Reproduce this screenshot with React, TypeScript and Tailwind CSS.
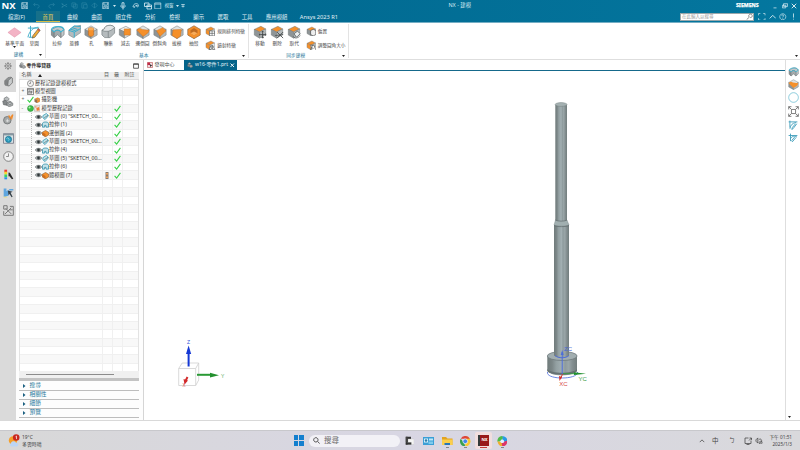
import React from "react";

type P = { s?: number };

/* ---------- drawings ---------- */

const SHAPES: Record<string, React.ReactNode> = {
  plane: <path d="M1 9 8 4l7 5-7 5z" fill="#f3b3c5" stroke="#e08fa8" strokeWidth=".5" />,
  extrude: (
    <g stroke="#6e7678" strokeWidth=".7">
      <path d="M1.500 6l3 2.500v6l-3-2.500z" fill="#8f9698" />
      <path d="M4.500 8.500C5.500 6 10.500 6 11.500 8.500v6l3.500-3V6c-2-3-5-4-8-3L1.500 6z" fill="#c3c9cb" />
      <path d="M4.500 8.500C5.500 6 10.500 6 11.500 8.500v6L8 11.500l-3.500 3z" fill="#a4abad" />
      <path d="M1.500 6c1-3.500 12-5 13.500 0M4.500 8.500C5.500 6 10.500 6 11.500 8.500L15 6M1.500 6l3 2.500" fill="none" stroke="#3eb4d2" strokeWidth="1.200" />
    </g>
  ),
  revolve: (
    <g strokeWidth=".7">
      <path d="M2 7l5-4 8-1.500v8L7 15l-5-3z" fill="#b4bbbd" stroke="#7d8587" />
      <path d="M2 7l6 2 7-4M2 7l6-5 7 1M3.500 5.500l6 2M5.500 4l6 2M8 9v6" fill="none" stroke="#35afd0" strokeWidth="1.100" />
    </g>
  ),
  union: (
    <g stroke="#6e7678" strokeWidth=".7">
      <path d="M1 7l3-2c0-4 9-5 11-1v6l-5 5H4l-3-3z" fill="#b5bbbd" />
      <path d="M1 7l3-2c0-4 9-5 11-1l-4 3-3 1H4z" fill="#e1e4e5" />
      <path d="M8 8v7" />
    </g>
  ),
};

function Cube({ s = 14, top = "#d9dddd", left = "#8f9597", right = "#b4b9ba", kids }: P & { top?: string; left?: string; right?: string; kids?: React.ReactNode }) {
  return (
    <svg width={s} height={s} viewBox="0 0 16 16" className="shrink-0">
      <g stroke="#747a7b" strokeWidth=".6" strokeLinejoin="round">
        <path d="M1.500 5 9 1.500l5.500 3L7.500 8z" fill={top} />
        <path d="M1.500 5l6 3v7l-6-3.500z" fill={left} />
        <path d="M14.500 4.500 7.500 8v7l7-4z" fill={right} />
      </g>
      {kids}
    </svg>
  );
}

function Shape({ k, s = 14 }: P & { k: string }) {
  return (
    <svg width={s} height={s} viewBox="0 0 16 16" className="shrink-0">
      {SHAPES[k]}
    </svg>
  );
}

const O = "#f5902a";

function Block({ s = 14, children }: P & { children?: React.ReactNode }) {
  return (
    <svg width={s} height={s} viewBox="0 0 16 16" className="shrink-0">
      <g stroke="#747a7b" strokeWidth=".6" strokeLinejoin="round">
        <path d="M1 5 8 1l7 4-7 4z" fill="#dfe2e2" />
        <path d="M1 5l7 4v6.500L1 11.500z" fill="#8f9597" />
        <path d="M15 5 8 9v6.500l7-4z" fill="#b4b9ba" />
      </g>
      {children}
    </svg>
  );
}

function Sketch({ s = 14 }: P) {
  return (
    <svg width={s} height={s} viewBox="0 0 16 16" className="shrink-0">
      <path d="M1 3.500h13M4 1v13M1 14C3 6 7 3 13 2.500M2 14h6" fill="none" stroke="#42aeca" strokeWidth="1.100" />
      <path d="M13 4l2 2-6 8-3 1 .8-3z" fill="#f0ab37" stroke="#5b5343" strokeWidth=".7" />
      <path d="M13 4l2 2-1 1.500-2-2z" fill="#cf574a" />
    </svg>
  );
}

const movers = (
  <path d="M11 7v8M7 11h8M9.800 8.300 11 7l1.200 1.300M9.800 13.700 11 15l1.200-1.300M8.300 9.800 7 11l1.300 1.200M13.700 9.800 15 11l-1.300 1.200" stroke="#3f4445" strokeWidth="1" fill="#fff" />
);
const crossMark = <path d="M8 8l7 7M15 8l-7 7M6 12l9-1" stroke="#4a4f50" strokeWidth="1" fill="none" />;
const swapMark = (
  <g fill="#ecefef" stroke="#4a4f50" strokeWidth=".8">
    <path d="M8 10l4-3 3 3-4 4z" />
    <path d="M7 13c2 3 6 2 8-1" fill="none" />
  </g>
);
const gridMark = (
  <g fill="#fff" stroke="#4b5051" strokeWidth=".9">
    <path d="M7 7.500h7.500V15H7zM10.800 7.500V15M7 11.200h7.500" />
  </g>
);
const mirrorMark = <path d="M9.500 8v6.500H6zM11.500 8v6.500H15z" fill="#fff" stroke="#3b4041" strokeWidth=".9" />;

function Eye() {
  return (
    <svg width="7" height="6" viewBox="0 0 14 12" className="shrink-0">
      <path d="M.5 6C3 1.500 11 1.500 13.500 6 11 10.500 3 10.500.5 6z" fill="#b9bdbe" stroke="#444b4d" strokeWidth="1.100" />
      <circle cx="7" cy="6" r="2.800" fill="#30383a" />
    </svg>
  );
}

function Check({ s = 7 }: P) {
  return (
    <svg width={s} height={s} viewBox="0 0 12 12" className="shrink-0">
      <path d="M1 6.500 4.500 10.500 11 1.500" fill="none" stroke="#35cf45" strokeWidth="1.800" />
    </svg>
  );
}

function Clock({ s = 11, c = "#777" }: P & { c?: string }) {
  return (
    <svg width={s} height={s} viewBox="0 0 16 16" className="shrink-0" fill="none" stroke={c}>
      <circle cx="8" cy="8" r="7" strokeWidth="1.300" fill="#f1f1f1" />
      <path d="M8 3.500V8H4.500" strokeWidth="1.200" />
    </svg>
  );
}

function Parts({ s = 11 }: P) {
  return (
    <svg width={s} height={s} viewBox="0 0 16 16" className="shrink-0">
      <g stroke="#5c6062" strokeWidth=".8">
        <path d="M3 3l4-2 3 3-2 3-5-1z" fill="#b9bdbe" />
        <path d="M1 7l4-1 3 3-1 4-5-1z" fill="#85898b" />
        <path d="M7 9l4-2 4 3v3l-5 2-3-2z" fill="#a7abac" />
        <circle cx="11" cy="10.500" r="1.500" fill="#e6e8e8" />
      </g>
    </svg>
  );
}

function Down({ c = "#222" }: { c?: string }) {
  return (
    <svg width="3" height="2" viewBox="0 0 6 4" className="shrink-0">
      <path d="M0 0h6L3 4z" fill={c} />
    </svg>
  );
}

function Line({ s = 9, d, c = "#d4eaf2", w = 1.4 }: P & { d: string; c?: string; w?: number }) {
  return (
    <svg width={s} height={s} viewBox="0 0 16 16" className="shrink-0">
      <path d={d} fill="none" stroke={c} strokeWidth={w} />
    </svg>
  );
}

const SAVE = "M1.500 1.500h13v13h-13zM4 1.500v5h8v-5M4 14.500V9h8v5.500M6 11.500h4";

/* ---------- top bar ---------- */

function TitleBar() {
  return (
    <div className="flex h-[11px] items-center text-[5px] text-[#d5eaf2]">
      <div className="w-[18px] pl-[1.500px] text-[9.500px] leading-none font-bold text-white">NX</div>
      <div className="flex w-[13px] justify-center"><Line s={7.500} d={SAVE} /></div>
      <div className="flex w-[11px] justify-center"><Line s={7} c="#2f88a8" d="M5 2 1.500 6 5 9.500M1.500 6h8c6 0 6 8 0 8" /></div>
      <div className="flex w-[18px] justify-center"><Line s={7} c="#2f88a8" d="M11 2l3.500 4L11 9.500M14.500 6h-8c-6 0-6 8 0 8" /></div>
      <div className="flex w-[9px] justify-center"><Line s={7} c="#2f88a8" d="M2 5l12 6M2 11l12-6M1 4h3v3M1 12h3V9" /></div>
      <div className="flex w-[10px] justify-center"><Line s={7} c="#2f88a8" d="M2 2h8v9H2zM6 5h8v9H6z" /></div>
      <div className="flex w-[10px] justify-center"><Line s={7} c="#2f88a8" d="M2 2h10v4M2 2v12h4M6 6h8v8H6z" /></div>
      <div className="flex w-[10px] justify-center"><Line s={7} c="#2f88a8" d="M2 8l6-6 6 6-6 6zM8 2v12" /></div>
      <div className="flex w-[13px] justify-center"><Line s={7.500} d={SAVE} /></div>
      <div className="flex w-[4px] justify-center"><Down c="#d4eaf2" /></div>
      <div className="flex w-[13px] justify-center"><Line s={8} w={1.700} d="M6 1.500h4v7H6zM3.500 7c0 6 9 6 9 0M8 11.500V15" /></div>
      <div className="flex w-[13px] justify-center"><Line s={7} w={1.700} d="M2 10l3 3 2-4M3 11c-1-9 12-9 12-3 0 4-5 4-5 0M8 8h5" /></div>
      <div className="flex w-[12px] justify-center"><Line s={8} w={1.700} d="M1 2h9v7H1zM6 6h9v8H6zM6 9h9" /></div>
      <div className="flex w-[8px] justify-center"><Line s={7.500} d="M1.500 2h13v12.500h-13zM1.500 4.500h13" /></div>
      <div className="w-[14px] text-center text-[4.500px]">視窗</div>
      <div className="flex w-[9px] items-center justify-between"><Down c="#d4eaf2" /><Line s={4} w={3} d="M1 2h14M3 8h10L8 13z" /></div>
      <div className="ml-[263.500px] flex-1 text-[5.400px]">NX - 建模</div>
      <div className="w-[36px] text-[5.200px] font-bold text-white [-webkit-text-stroke:.25px_white]">SIEMENS</div>
      <div className="flex w-[28px] items-center justify-between pr-[3px]">
        <Line s={6} d="M4 13h8" w={2} />
        <Line s={6} w={2} d="M4 2h11v7H4zM1 6h9v7H1z" />
        <Line s={6} w={2.200} c="#fff" d="M2 2l12 12M14 2 2 14" />
      </div>
    </div>
  );
}

const TABS = ["曲線", "曲面", "組立件", "分析", "檢視", "顯示", "選取", "工具", "應用模組"];

function MenuBar() {
  return (
    <div className="flex h-[11px] items-center text-[5.400px] text-[#e2f1f6]">
      <div className="w-[36px] pt-px pl-[8px] text-[5.400px]">檔案(F)</div>
      <div className="flex h-full w-[24px] items-center justify-center border-b border-[#d9bd45] bg-[#17708a] pt-[1.500px] text-[#e6cc58]">首頁</div>
      <div className="flex gap-[13.400px] pt-px pl-[7px] whitespace-nowrap">
        {TABS.map((t) => <span key={t}>{t}</span>)}
        <span className="-ml-px text-[5.700px] leading-[8px]">Ansys 2023 R1</span>
      </div>
      <div className="ml-auto flex h-[8px] w-[74px] items-center justify-between border border-[#9aa7ab] bg-white pl-px text-[4.500px] text-[#9b9b9b]">
        在此輸入以搜尋
        <Line s={7} c="#555" w={1.500} d="M7.500 9.500a4 4 0 1 1 2 1M7.500 9.500 1.500 15" />
      </div>
      <div className="flex w-[46px] items-center justify-between pr-[3px] pl-[4px]">
        <Line s={7.500} d="M1 5V1h4M11 1h4v4M15 11v4h-4M5 15H1v-4" />
        <Line s={7.500} w={2} d="M1.500 11.500 8 5l6.500 6.500" />
        <Line s={7.500} d="M8 1.500a6.500 6.500 0 1 0 .1 0M6 6c0-3 4-3 4 0 0 1.500-2 1.500-2 3.500M8 11v1.500" />
        <Line s={7} w={1.900} d="M8 1v9.500M8 13v2" />
      </div>
    </div>
  );
}

/* ---------- ribbon ---------- */

function Tool({ icon, label, wide }: { icon: React.ReactNode; label: string; wide?: boolean }) {
  return (
    <div className={wide ? "flex w-[19.500px] flex-col items-center" : "flex w-[17.100px] flex-col items-center"}>
      <div className="flex h-[15px] items-center">{icon}</div>
      <div className="h-[7px] text-[4.700px] leading-[8px] whitespace-nowrap">{label}</div>
      {wide && label.length > 2 && <Down />}
    </div>
  );
}

function SmallTool({ icon, label }: { icon: React.ReactNode; label: string }) {
  return (
    <div className="flex h-[14px] items-center gap-[1.500px] text-[4.600px] whitespace-nowrap">
      {icon}
      {label}
    </div>
  );
}

function Group({ label, className, labelClass, children }: { label: string; className: string; labelClass: string; children: React.ReactNode }) {
  return (
    <div className={"flex h-[34px] flex-col border-r border-[#e3e3e3] " + className}>
      <div className="flex h-[28px]">{children}</div>
      <div className="flex h-[7px] items-center text-[4.700px] text-[#28799a]">
        <span className={"flex-1 pt-px text-center " + labelClass}>{label}</span>
        <span className="pr-[3px]"><Down /></span>
      </div>
    </div>
  );
}

function Ribbon() {
  return (
    <div className="flex h-[37px] border-b border-[#dedede] bg-white pt-px text-[#444]">
      <Group label="建構" className="w-[46px] pl-[5px]" labelClass="pr-[7px]">
        <Tool wide icon={<Shape k="plane" s={15} />} label="基準平面" />
        <Tool wide icon={<Sketch />} label="草圖" />
      </Group>
      <Group label="基本" className="w-[203px] pl-[2.500px]" labelClass="pr-[3px]">
        <Tool icon={<Shape k="extrude" s={15} />} label="拉伸" />
        <Tool icon={<Shape k="revolve" s={14.500} />} label="旋轉" />
        <Tool icon={<Block><path d="M5 4.500c0-2 6-2 6 0v7c-1 2-5 2-6 0z" fill={O} stroke="#b9651b" strokeWidth=".6" /><ellipse cx="8" cy="4.500" rx="3" ry="1.400" fill="#f8ad5c" /></Block>} label="孔" />
        <Tool icon={<Shape k="union" s={14.500} />} label="聯集" />
        <Tool icon={<Cube top="#eceeee" right="#dfe2e2" kids={<path d="M7 4.500h7v7H7z" fill={O} stroke="#c36e22" strokeWidth=".5" />} />} label="減去" />
        <Tool icon={<Block><path d="M1 6c2-2.500 4-2.500 6-1l8 1c-1 4-4 5-7 7z" fill={O} stroke="#c36e22" strokeWidth=".5" /></Block>} label="邊倒圓" />
        <Tool icon={<Block><path d="M4 6.500 11 3l4 3.500L8 13z" fill={O} stroke="#c36e22" strokeWidth=".5" /></Block>} label="倒斜角" />
        <Tool icon={<Block><path d="M3.500 5.500 13 5l-1 7.500-4 3-5.500-3.500z" fill={O} stroke="#c36e22" strokeWidth=".5" /></Block>} label="拔模" />
        <Tool icon={<Block><path d="M1 5l7-4 7 4v6.500l-7 4-7-4z" fill={O} stroke="#a9652a" strokeWidth=".6" /><path d="M4 6l4-2.500L12 6v3.500L8 12 4 9.500z" fill="#c06c22" /><path d="M4 9.500 8 7.500l4 2L8 12z" fill="#f8ab58" /></Block>} label="抽殼" />
        <div className="pl-[3px]">
          <SmallTool icon={<Cube s={10.500} top={O} left={O} right="#e9ecec" kids={gridMark} />} label="規則排列特徵" />
          <SmallTool icon={<Cube s={10.500} top={O} left={O} right="#e9ecec" kids={mirrorMark} />} label="鏡射特徵" />
        </div>
      </Group>
      <Group label="同步建模" className="w-[100px] pl-[2.500px]" labelClass="pr-[2px]">
        <Tool icon={<Cube top={O} kids={movers} />} label="移動" />
        <Tool icon={<Cube top={O} kids={crossMark} />} label="刪除" />
        <Tool icon={<Cube top={O} kids={swapMark} />} label="取代" />
        <div className="pl-[3px]">
          <SmallTool icon={<Cube s={10.500} top={O} kids={<path d="M7 7l4-2 4 2v6l-4 2-4-2z" fill="#eee" stroke="#444" />} />} label="偏置" />
          <SmallTool icon={<Cube s={10.500} top={O} left={O} kids={<path d="M6 8h6l3 7M7 15l3-7" fill="#fff" stroke="#444" />} />} label="調整圓角大小" />
        </div>
      </Group>
      <div className="flex flex-1 items-end justify-end pr-[2px] pb-[2.500px]"><Down /></div>
    </div>
  );
}

/* ---------- left side ---------- */

function Rail() {
  return (
    <div className="flex w-[16px] flex-col items-center bg-[#dadada]">
      <div className="flex h-[10px] items-center pt-[2px]"><Line s={8} c="#777" w={1.600} d="M8 3a5 5 0 1 0 .1 0M8 6a2 2 0 1 0 .1 0M8 0v3M8 13v3M0 8h3M13 8h3M2.500 2.500l2 2M11.500 11.500l2 2M13.500 2.500l-2 2M4.500 11.500l-2 2" /></div>
      <div className="flex h-[22px] items-center">
        <svg width="9" height="11" viewBox="0 0 14 16" stroke="#666" strokeWidth=".8">
          <path d="M1 7l5-5 5-1 2 2v7l-5 5-6-1-1-2z" fill="#8e9293" />
          <path d="M7 6l5-4 1 1v7l-5 5-2-1z" fill="#c9cccd" />
          <path d="M3 6v7M5 6v8" />
        </svg>
      </div>
      <div className="flex h-[19px] w-full items-center justify-center bg-white"><Parts s={11.500} /></div>
      <div className="flex h-[17px] items-center">
        <svg width="12" height="11" viewBox="0 0 16 16">
          <circle cx="7" cy="9" r="5.500" fill="#a3a6a6" stroke="#626667" />
          <path d="M5 10h5M7 7v5" stroke="#eee" />
          <path d="M9 2l2 4 4-5-2 7" fill="none" stroke="#f08a2c" strokeWidth="1.800" />
        </svg>
      </div>
      <div className="flex h-[20px] items-center">
        <svg width="11" height="11" viewBox="0 0 16 16">
          <path d="M.7 1h14.600v14H.7z" fill="#d8e2e5" stroke="#667" />
          <path d="M.7 1h14.600v2.500H.7z" fill="#8397a0" />
          <circle cx="8" cy="9.300" r="4.500" fill="#2d9dc0" stroke="#176986" />
          <path d="M5 8l2-1 2 2-1 2" stroke="#a5e0e0" fill="none" />
        </svg>
      </div>
      <div className="flex h-[16px] items-center"><Clock s={11} /></div>
      <div className="flex h-[21px] items-center">
        <svg width="11" height="11" viewBox="0 0 16 16">
          <path d="M2 1h4v4H2z" fill="#ec3b34" /><path d="M2 4h4v4H2z" fill="#f5d92c" /><path d="M2 8h4v4H2z" fill="#35d466" /><path d="M2 12h4v3H2z" fill="#2c92e8" />
          <path d="M8 5l2 .5 5 8.500-2 1-4-5-1 1z" fill="#2b2b2b" />
        </svg>
      </div>
      <div className="flex h-[15px] items-center">
        <svg width="11" height="11" viewBox="0 0 16 16">
          <path d="M1 2h4v12H1zM5 6l3-2v9H5zM9 3h6v2H9z" fill="#5fa6df" />
          <path d="M7 5l7 2-3 1.500 3 5.500-1.500 1L9.500 10 8 12z" fill="#344049" /><path d="M1 14h5v1.500H1z" fill="#eadf8d" />
        </svg>
      </div>
      <div className="flex h-[21px] items-center"><Line s={11} c="#777" w={1.400} d="M1 1h5v5H1zM10 2h5v13H1V9M3 13l9-9M4 5l8 8M9 7h5" /></div>
    </div>
  );
}

type Row = { kind: "root" | "item"; icon: React.ReactNode; text: string; flag?: boolean; check?: boolean; twig?: string };

const sk = (
  <svg width="7" height="7" viewBox="0 0 16 16" className="shrink-0">
    <path d="M2 6 10 1l5 5-8 9-5-4z" fill="#bfe4ec" stroke="#2b93ae" strokeWidth="1.700" />
    <path d="M5 11l9-6" stroke="#61757a" strokeWidth="1.800" />
  </svg>
);
const ex = <svg width="7" height="7" viewBox="0 0 16 16" className="shrink-0"><path d="M1 6c0-5 14-5 14 0v8H9v-4H6v4H1z" fill="#c3e2e9" stroke="#2b8ba5" strokeWidth="1.800" /></svg>;
const bl = <Block s={7}><path d="M1 5l7-4 7 4v6.500l-7 4-7-4z" fill={O} stroke="#8b5a2b" /><path d="M1 5l7 4v6.500l-7-4z" fill="#cc6d1e" /></Block>;

const ROWS: Row[] = [
  { kind: "root", icon: <Clock s={7} c="#555" />, text: "歷程記錄建模模式" },
  { kind: "root", twig: "+", icon: <Line s={7} c="#555" w={1.600} d="M1 1h14v14H1zM1 4h14M4 13V7h3v6M10 7v6M8 9h5" />, text: "模型視圖" },
  { kind: "root", twig: "+", icon: <><Check /><Cube s={6.500} top={O} left="#9d6a45" right={O} /></>, text: "攝影機" },
  {
    kind: "root", twig: "-", check: true, text: "模型歷程記錄",
    icon: (
      <>
        <svg width="7" height="7" viewBox="0 0 14 14"><circle cx="7" cy="7" r="6" fill="#3bbd45" stroke="#258a30" /><circle cx="5" cy="5" r="2" fill="#b5f0b5" /></svg>
        <svg width="6.500" height="7" viewBox="0 0 14 14"><path d="M1 1h12v12H1z" fill="#eee6e0" stroke="#a09a96" /><path d="M2 2l4 1-2 3zM5 6l6-2 1 7-6 1z" fill="#ea7b35" /></svg>
      </>
    ),
  },
  { kind: "item", check: true, icon: sk, text: '草圖 (0) "SKETCH_00...' },
  { kind: "item", check: true, icon: ex, text: "拉伸 (1)" },
  { kind: "item", check: true, icon: bl, text: "邊倒圓 (2)" },
  { kind: "item", check: true, icon: sk, text: '草圖 (3) "SKETCH_00...' },
  { kind: "item", check: true, icon: ex, text: "拉伸 (4)" },
  { kind: "item", check: true, icon: sk, text: '草圖 (5) "SKETCH_00...' },
  { kind: "item", check: true, icon: ex, text: "拉伸 (6)" },
  { kind: "item", check: true, flag: true, icon: bl, text: "體模圖 (7)" },
];

function TreeRow({ row, odd }: { row?: Row; odd: boolean }) {
  return (
    <div className={"flex h-[8.360px] shrink-0 items-center border-b border-[#f0f0f0] " + (odd ? "bg-[#f8f8f8]" : "bg-white")}>
      <div className="flex h-full w-[83px] items-center overflow-hidden border-r border-[#f0f0f0] whitespace-nowrap">
        {row && row.kind === "root" && (
          <>
            <span className="w-[7px] pl-[2px] text-[5px] leading-none text-[#666]">{row.twig}</span>
            <span className="flex items-center">{row.icon}</span>
            <span className="pl-[1.500px] text-[5.200px] leading-none">{row.text}</span>
          </>
        )}
        {row && row.kind === "item" && (
          <>
            <span className="ml-[11.500px] h-full w-[3.500px] shrink-0 border-l border-dotted border-[#bbb]" />
            <Eye />
            {row.icon}
            <span className="pl-[.500px] text-[5.200px] leading-none">{row.text}</span>
          </>
        )}
      </div>
      <div className="flex h-full w-[10px] items-center justify-center border-r border-[#f0f0f0]">
        {row?.flag && <svg width="4" height="7" viewBox="0 0 8 14"><path d="M1 0h6v14H1z" fill="#8b7b6e" /><path d="M2 2h4v3H2zM2 9h4v3H2z" fill="#f0a35c" /></svg>}
      </div>
      <div className="flex h-full w-[10px] items-center justify-center border-r border-[#f0f0f0]">{row?.check && <Check />}</div>
    </div>
  );
}

function Navigator() {
  return (
    <div className="flex w-[128px] flex-col border-r border-[#d5d5d5] bg-[#fdfdfd] pr-[4px] pl-[2.500px] text-[#333]">
      <div className="flex h-[11.500px] shrink-0 items-center font-bold text-[#333]">
        <Parts s={7} />
        <span className="flex-1 pl-px text-[4.900px]">零件導覽器</span>
        <Line s={6} c="#333" w={2} d="M1.500 2h13v12h-13zM1.500 3.500h13" />
      </div>
      <div className="flex h-[8px] shrink-0 items-center border-b border-[#dcdcdc] bg-[#efefef] text-[5px] text-[#555]">
        <span className="flex w-[83px] items-center gap-[6.500px] pl-[3px]">名稱<svg width="4" height="3" viewBox="0 0 8 6"><path d="M0 6h8L4 0z" fill="#222" /></svg></span>
        <span className="w-[10px] text-center">目</span>
        <span className="w-[10px] text-center">最</span>
        <span className="flex-1 pl-[3px]">附註</span>
      </div>
      <div className="flex h-[291px] shrink-0 flex-col overflow-hidden border-x border-[#e3e3e3]">
        {Array.from({ length: 35 }, (_, i) => <TreeRow key={i} row={ROWS[i]} odd={i % 2 === 1} />)}
      </div>
      <div className="flex h-[7.500px] shrink-0 items-center bg-[#f0f0f0] pl-[7.500px]"><div className="h-px w-[88px] bg-[#8c8c8c]" /></div>
      <div className="h-[3px] shrink-0 bg-[#c3c3c3]" />
      <div className="pt-[.700px]">
        {["搜尋", "相關性", "細節", "預覽"].map((t) => (
          <div key={t} className="flex h-[9.200px] items-center gap-[4px] border-b border-[#bdbdbd] pl-[4px] text-[5.700px] leading-none text-[#24789a]">
            <svg width="3" height="4" viewBox="0 0 6 8"><path d="M0 0l5 4-5 4z" fill="#1a5f80" /></svg>
            {t}
          </div>
        ))}
      </div>
    </div>
  );
}

/* ---------- graphics window ---------- */

function Model() {
  return (
    <svg width="641" height="349" viewBox="144 71 641 349" className="block font-['Liberation_Sans',sans-serif]">
      <defs>
        <linearGradient id="steel">
          <stop offset="0" stopColor="#707b7b" />
          <stop offset=".16" stopColor="#7b8687" />
          <stop offset=".3" stopColor="#93a0a2" />
          <stop offset=".5" stopColor="#a2afb2" />
          <stop offset=".6" stopColor="#8e9b9d" />
          <stop offset=".72" stopColor="#9aa6a8" />
          <stop offset=".84" stopColor="#848f91" />
          <stop offset="1" stopColor="#727d7d" />
        </linearGradient>
      </defs>
      <path d="M547.300 356v14c0 2.500 6 5.500 14.700 5.500s15-3 15-5.500v-14z" fill="url(#steel)" />
      <path d="M547.300 369c3 5 26 5 29.700 0v2c-3 5-26 5-29.700 0z" fill="#667172" />
      <ellipse cx="562.200" cy="356" rx="14.900" ry="4.500" fill="#a2aeb0" stroke="#687375" strokeWidth=".7" />
      <path d="M554 225h15v130.500c-2 2.500-13 2.500-15 0z" fill="url(#steel)" />
      <path d="M555.500 220h11.500l2 5c-2 1.500-13 1.500-15 0z" fill="#a1afb0" stroke="#758081" strokeWidth=".4" />
      <path d="M555.300 105h11.700v115c-2 1.600-9.700 1.600-11.700 0z" fill="url(#steel)" />
      <path d="M555.300 220c2 1.600 9.700 1.600 11.700 0M554 225.500c2 1.500 13 1.500 15 0" fill="none" stroke="#5a6566" strokeWidth=".6" />
      <ellipse cx="561.100" cy="104.500" rx="5.900" ry="1.900" fill="#a5b1b2" stroke="#758081" strokeWidth=".5" />
      <path d="M555 355.500c3 3 11 3 14 0" fill="none" stroke="#4767da" strokeWidth=".9" />
      <path d="M547.500 372c-2 8 31 8 30 0" fill="none" stroke="#6d87e4" strokeWidth="1" />
      <path d="M562.200 374v-22" stroke="#4c6dda" strokeWidth="1" />
      <path d="M560.700 355h3l-1.500-5z" fill="#4c6dda" />
      <path d="M563 373.700h14" stroke="#3c9b45" strokeWidth="1" />
      <path d="M574 372.300l12 1.500-12 1.300z" fill="#239130" />
      <path d="M562.500 374l-2 5" stroke="#d43b36" strokeWidth="1" />
      <path d="M559 376l3 1-2.500 4z" fill="#d62f2b" />
      <text x="564" y="351.200" fontSize="6" fill="#4667d5">ZC</text>
      <text x="578.500" y="381.200" fontSize="6" fill="#3b9b46">YC</text>
      <text x="559.300" y="386.200" fontSize="6" fill="#d64a45">XC</text>

      <g fill="none" stroke="#cfcfcf" strokeWidth=".8">
        <path d="M178.700 368.500h17v17h-17zM178.700 368.500l3.500-5.500h16.500l-3 5.500M198.700 363v17l-3 5.500" />
      </g>
      <path d="M188.600 366.500V352" stroke="#1538d4" strokeWidth="2" />
      <path d="M186 354l2.600-8.500 2.600 8.500z" fill="#1538d4" />
      <path d="M197 374.800h14" stroke="#2a9a35" strokeWidth="2" />
      <path d="M210 372.800l9 2.500-9 2.300z" fill="#23902e" />
      <path d="M187.500 377l-2.500 5" stroke="#d22a2a" strokeWidth="2" />
      <path d="M183.500 379l4.500 1.500-3.500 4z" fill="#d22a2a" />
      <text x="187" y="343.800" fontSize="5" fill="#3557db">Z</text>
      <text x="221" y="377.500" fontSize="5" fill="#56a85e">Y</text>
      <text x="182.500" y="387" fontSize="4.500" fill="#d84a4a">X</text>
    </svg>
  );
}

function Graphics() {
  return (
    <div className="flex w-[641px] flex-col">
      <div className="flex h-[11px] shrink-0 items-end border-b border-[#15698b] text-[5.200px]">
        <div className="flex h-[10px] w-[40px] items-center gap-[2px] pl-[2.500px] text-[#555]">
          <svg width="6" height="6" viewBox="0 0 12 12"><path d="M1 1h10v10H1z" fill="#f1d7dd" stroke="#a33" /><path d="M1 1h5v5H1z" fill="#c52b48" /><path d="M5 4l6 3-3 1-1 3z" fill="#333" /></svg>
          <span className="text-[5px]">發現中心</span>
        </div>
        <div className="flex h-[10px] w-[53px] items-center gap-[2px] bg-[#05648a] pl-[3px] text-[#e9f4f8]">
          <Parts s={6} />
          <span className="text-[5.100px] whitespace-nowrap">w16-零件1.prt</span>
          <Line s={4.500} w={3.500} c="#fff" d="M2 2l12 12M14 2 2 14" />
        </div>
      </div>
      <Model />
    </div>
  );
}

function RightRail() {
  return (
    <div className="flex flex-1 flex-col items-center border-l border-[#dedede] bg-white pt-[5px]">
      <div className="flex h-[13px] items-center"><Shape k="extrude" s={11} /></div>
      <div className="flex h-[13px] items-center"><Block s={11}><path d="M1 6c2-2.500 4-2.500 6-1l8 1c-1 4-4 5-7 7z" fill={O} /></Block></div>
      <div className="flex h-[13px] items-center"><Line s={11} c="#67bdd2" w={1.100} d="M8 1a7 7 0 1 0 .1 0" /></div>
      <div className="flex h-[14px] items-center"><Line s={11} c="#666" w={1.200} d="M1 5V1h4M11 1h4v4M15 11v4h-4M5 15H1v-4M1 1l4 4M15 1l-4 4M1 15l4-4M15 15l-4-4M5 5h6v6H5z" /></div>
      <div className="flex h-[13px] items-center"><Line s={10} c="#3b9cb9" w={1.400} d="M1 3h14M3 1v11M3 14C4 8 7 5 13 4M14 6l-6 8-2 1 1-3 5-6" /></div>
      <div className="flex h-[13px] items-center"><Line s={10} c="#3b9cb9" w={1.400} d="M1 4h14M4 1v12M4 9c3-5 7-4 10-3M13 7l-6 7-1-2 5-6" /></div>
      <div className="mt-auto mr-[8px] mb-[2.500px] flex"><Down /></div>
    </div>
  );
}

/* ---------- taskbar ---------- */

function Taskbar() {
  return (
    <div className="flex h-[20px] items-center border-t border-[#c8c8cc] bg-gradient-to-r from-[#d8d8d8] via-[#d8d6e3] to-[#d9d9dc] text-[#444]">
      <div className="flex w-[289px] items-center gap-[2px] pl-[8px]">
        <svg width="12" height="13" viewBox="0 0 12 13" className="shrink-0">
          <circle cx="5" cy="6.500" r="4.200" fill="#f5a02a" />
          <path d="M3 12.500a2 2 0 0 1 0-3.500c.5-2 4-2.500 5-.3 3 0 3 3.800 0 3.800z" fill="#bcd5f5" />
          <circle cx="8.200" cy="3.500" r="3.300" fill="#c9281f" />
          <path d="M7.500 2.800l1-.7v3" fill="none" stroke="#fff" strokeWidth=".7" />
        </svg>
        <div className="text-[4.900px] leading-[6.400px]"><div>19°C</div><div>多雲時晴</div></div>
      </div>
      <div className="flex w-[20px] items-center pl-[4.500px]">
        <div className="grid grid-cols-2 gap-[.7px]">
          {[0, 1, 2, 3].map((i) => <div key={i} className="size-[4.700px] bg-[#137fce]" />)}
        </div>
      </div>
      <div className="flex h-[12px] w-[91px] items-center gap-[4px] rounded-full bg-[#f2f1f6] pl-[4px] text-[7.500px] text-[#6a6a6a]">
        <Line s={7} c="#444" w={2} d="M6.500 1.500a5 5 0 1 0 .1 0M10.500 10l4.500 5" />
        搜尋
      </div>
      <div className="flex w-[18px] justify-center">
        <svg width="9" height="9" viewBox="0 0 12 12"><path d="M1 1h7v7H1z" fill="#333" /><path d="M4 4h8v7.500H4z" fill="#f4f4f4" stroke="#bbb" strokeWidth=".5" /><path d="M1 1h2.500v10.500H1z" fill="#444" /><path d="M1 8.500h7.500v3H1z" fill="#333" /></svg>
      </div>
      <div className="flex w-[20px] justify-center">
        <svg width="11" height="8" viewBox="0 0 22 16"><path d="M0 0h22v16H0z" fill="#3b9fd6" /><path d="M2 3h8v8H2z" fill="#d6f3fc" /><circle cx="6" cy="7" r="2.500" fill="#2d7dab" /><path d="M12 3h8v4h-8z" fill="#bfe8f8" /><path d="M11 9h9v5h-9z" fill="#7ecbed" /></svg>
      </div>
      <div className="flex w-[18px] flex-col items-center gap-[1px] pt-[3px]">
        <svg width="11" height="10" viewBox="0 0 22 20"><path d="M0 2h8l3 3h10v13H0z" fill="#e3a421" /><path d="M0 7h21v11H0z" fill="#fbcf4c" /><path d="M5 14h11v4H5z" fill="#2877b9" /></svg>
        <div className="h-px w-[3px] bg-[#888]" />
      </div>
      <div className="flex w-[19px] flex-col items-center gap-[1px] pt-[3px]">
        <svg width="10.500" height="10.500" viewBox="0 0 20 20">
          <path d="M10 10V0a10 10 0 0 1 0 20z" fill="#f8c832" /><path d="M1.300 5A10 10 0 0 1 18.700 5H10z" fill="#dd453a" /><path d="M1.300 5 8 13l2 7A10 10 0 0 1 1.300 5z" fill="#379e51" />
          <circle cx="10" cy="10" r="4.500" fill="#4286ed" stroke="#fff" strokeWidth="1.200" />
        </svg>
        <div className="h-px w-[3px] bg-[#888]" />
      </div>
      <div className="flex h-[17px] w-[17px] flex-col items-center justify-end rounded-[2px] bg-[#f1dede] pb-px">
        <div className="mb-[1.500px] flex size-[11px] items-center justify-center border-l-2 border-[#343b3b] bg-[#981818] text-[4.200px] font-bold text-white">NX</div>
        <div className="h-px w-[7px] bg-[#c53c3c]" />
      </div>
      <div className="flex w-[20px] flex-col items-center gap-[1px] pt-[3px]">
        <svg width="10.500" height="10.500" viewBox="0 0 20 20">
          <path d="M10 0a10 10 0 0 1 10 10l-6 2-4-6z" fill="#259be6" /><path d="M10 0A9 9 0 0 0 1 11l6-1 4-6z" fill="#4fbb48" /><path d="M1 10c1 7 5 10 10 10l1-6-7-3z" fill="#f1ad2c" /><path d="M20 9c0 7-5 11-10 11l-1-6 6-4z" fill="#dc3768" />
          <circle cx="10" cy="10" r="3.500" fill="#e4efff" />
        </svg>
        <div className="h-px w-[3px] bg-[#888]" />
      </div>
      <div className="ml-auto flex items-center">
        <div className="flex w-[13px]"><Line s={6} c="#444" w={2} d="M2 11l6-6 6 6" /></div>
        <div className="w-[16px] text-[6.500px]">中</div>
        <div className="w-[16px] pl-px text-[6px]">ㄅ</div>
        <div className="flex w-[11px]"><Line s={8} c="#444" w={1.500} d="M9 2H2v11h12V7M5 15h6M11 2h4v4M10 7l5-5" /></div>
        <div className="flex w-[13px]"><Line s={7.500} c="#444" w={1.600} d="M2 9V6l4-4v11L2 9M8 6c4-4 7 0 6 4M12 9a3 3 0 1 0 .1 0M10 14l4-4" /></div>
        <div className="w-[32px] pr-[8px] text-right text-[4.700px] leading-[7px] whitespace-nowrap"><div>下午 01:51</div><div>2025/1/3</div></div>
      </div>
    </div>
  );
}

export default function App() {
  return (
    <div className="flex h-[450px] w-[800px] flex-col overflow-hidden bg-white font-['Noto_Sans','Noto_Sans_CJK_TC',sans-serif]">
      <header className="h-[23px] shrink-0 border-b border-[#75aec4] bg-gradient-to-r from-[#00638a] to-[#04779f]">
        <TitleBar />
        <MenuBar />
      </header>
      <Ribbon />
      <main className="flex h-[361px] shrink-0 border-b border-[#d9d9d9]">
        <Rail />
        <Navigator />
        <Graphics />
        <RightRail />
      </main>
      <div className="h-[9px] shrink-0" />
      <Taskbar />
    </div>
  );
}
